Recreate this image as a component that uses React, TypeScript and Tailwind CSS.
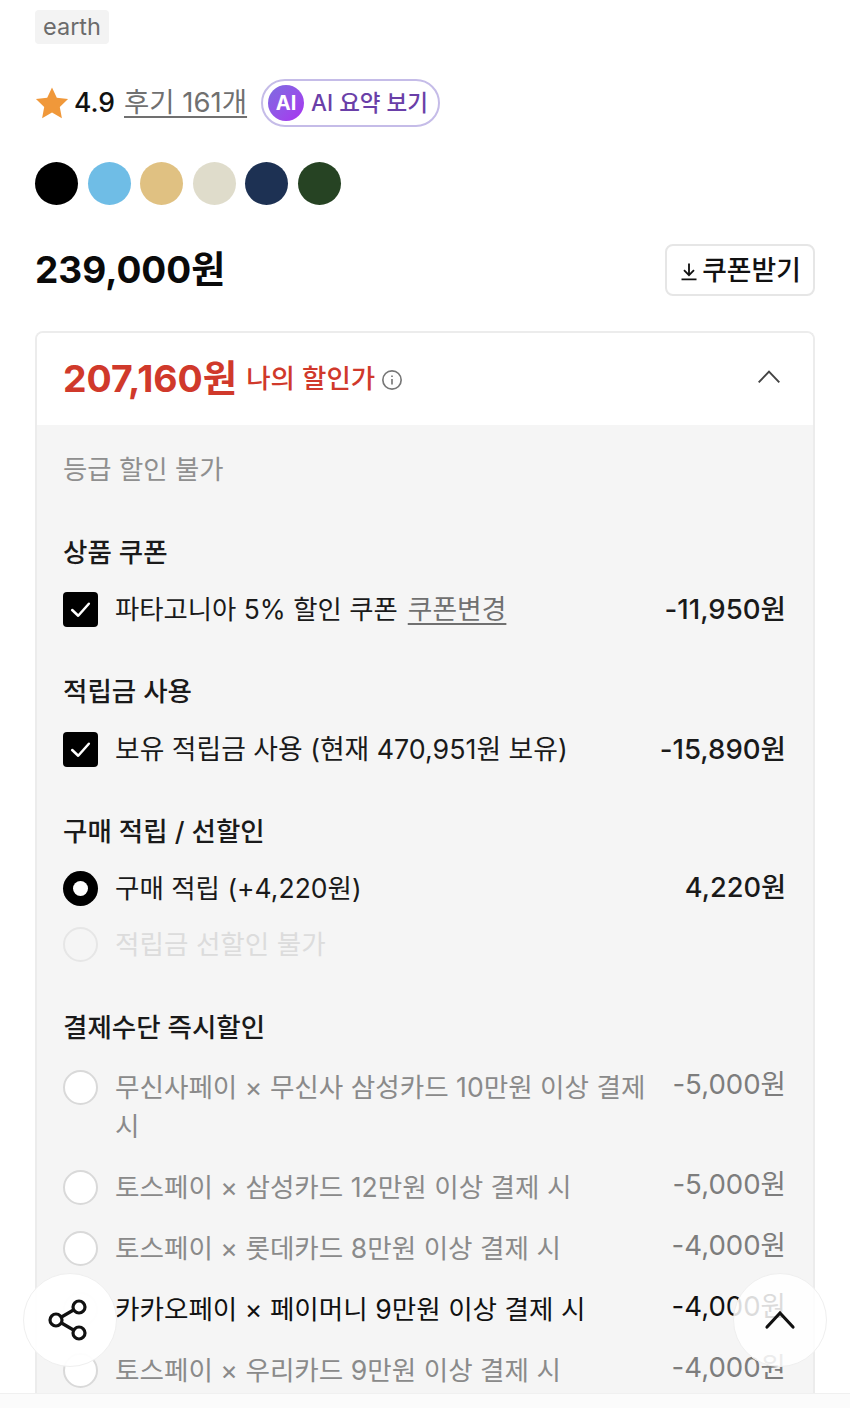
import React from "react";

const font = { fontFamily: '"Inter","Noto Sans CJK KR","Noto Sans",sans-serif' };

function Check() {
  return (
    <span className="flex h-[35px] w-[35px] shrink-0 items-center justify-center rounded-[4px] bg-black">
      <svg width="25" height="25" viewBox="0 0 24 24" fill="none" stroke="#fff" strokeWidth="2.4" strokeLinecap="round" strokeLinejoin="round">
        <path d="M4 12.5 L9.8 18 L20 6.5" />
      </svg>
    </span>
  );
}

function Radio({ kind }: { kind: "on" | "off" | "faint" }) {
  if (kind === "on")
    return (
      <span className="flex h-[35px] w-[35px] shrink-0 items-center justify-center rounded-full bg-black">
        <span className="h-[15px] w-[15px] rounded-full bg-white" />
      </span>
    );
  return (
    <span
      className={
        kind === "off"
          ? "h-[35px] w-[35px] shrink-0 rounded-full border-2 border-[#d9d9d9] bg-white"
          : "h-[35px] w-[35px] shrink-0 rounded-full border-2 border-[#e6e6e6] bg-[#f5f5f5]"
      }
    />
  );
}

function Title({ children, className }: { children: React.ReactNode; className?: string }) {
  return <div className={"text-[26.5px] leading-[39px] font-medium text-[#1a1a1a] " + (className ?? "")}>{children}</div>;
}

function PayRow({ text, amount, dark, className }: { text: string; amount: string; dark?: boolean; className?: string }) {
  return (
    <div className={"flex items-start " + (className ?? "")}>
      <span className="mr-[17px] mt-[2px] flex"><Radio kind={dark ? "faint" : "off"} /></span>
      <span className={"w-[540px] text-[26.6px] leading-[39px] " + (dark ? "text-[#111]" : "text-[#8a8a8a]")}>{text}</span>
      <span className={"ml-auto -mt-[3px] text-[27.6px] leading-[39px] " + (dark ? "text-[#111]" : "text-[#7d7d7d]")}>{amount}</span>
    </div>
  );
}

export default function App() {
  return (
    <div style={font} className="relative h-[1408px] w-[850px] overflow-hidden bg-white">
      <div className="px-[35px] pt-[10px]">
        <div className="inline-block h-[34px] rounded-[4px] bg-[#f3f3f3] px-[8px] text-[23.5px] leading-[34px] text-[#6b6b6b]">earth</div>

        <div className="mt-[35px] flex h-[48px] items-center">
          <svg width="36" height="36" viewBox="0 0 24 24" className="-ml-[1px]">
            <path fill="#f0983a" d="M12 1.6l3.2 6.9 7.5.9-5.5 5.2 1.4 7.5L12 18.4l-6.6 3.7 1.4-7.5L1.300 9.400l7.500-.9z" />
          </svg>
          <span className="ml-[4px] text-[26.5px] font-medium text-[#111]">4.9</span>
          <span className="ml-[9px] text-[27.5px] text-[#707070] underline underline-offset-[4px]">후기 161개</span>
          <span className="ml-[14px] flex h-[48px] w-[179px] items-center rounded-full border-2 border-[#c5bce8] bg-white pl-[5px]">
            <span className="flex h-[36px] w-[36px] items-center justify-center rounded-full bg-gradient-to-br from-[#7b6be0] to-[#a82ff0] text-[20px] font-bold text-white">AI</span>
            <span className="ml-[7px] text-[22.500px] font-medium text-[#6a3fa8]">AI 요약 보기</span>
          </span>
        </div>

        <div className="mt-[35px] flex gap-[9.500px]">
          {["bg-[#000000]", "bg-[#6fbde6]", "bg-[#e0c182]", "bg-[#dfdccb]", "bg-[#1d3153]", "bg-[#264323]"].map((c) => (
            <span key={c} className={"h-[43px] w-[43px] rounded-full " + c} />
          ))}
        </div>

        <div className="mt-[39px] flex items-center justify-between">
          <span className="text-[37px] font-bold leading-[52px] text-[#0a0a0a]">239,000원</span>
          <span className="flex h-[52px] w-[150px] items-center justify-center rounded-[8px] border-2 border-[#e6e6e6] bg-white text-[26.800px] font-medium text-[#111]">
            <svg width="20" height="20" viewBox="0 0 24 24" fill="none" stroke="#111" strokeWidth="2.2" className="mr-[3px] mt-[2px]">
              <path d="M12 3v13M6 11l6 6 6-6M3 22h18" />
            </svg>
            쿠폰받기
          </span>
        </div>

        <div className="mt-[35px] overflow-hidden rounded-t-[8px] border-2 border-b-0 border-[#ececec]">
          <div className="flex h-[92px] items-center bg-white pl-[26px] pr-[31px]">
            <span className="text-[37.400px] font-bold text-[#d0392b]">207,160원</span>
            <span className="ml-[9px] text-[26.500px] font-medium text-[#d0392b]">나의 할인가</span>
            <svg width="22" height="22" viewBox="0 0 24 24" fill="none" stroke="#777" strokeWidth="1.800" className="ml-[6px] mt-[2px]">
              <circle cx="12" cy="12" r="10" />
              <path d="M12 11v6M12 7v1.600" />
            </svg>
            <svg width="26" height="26" viewBox="0 0 24 24" fill="none" stroke="#444" strokeWidth="1.800" className="ml-auto -mt-[4px]">
              <path d="M2.500 17 L12 7 L21.500 17" />
            </svg>
          </div>

          <div className="h-[1000px] bg-[#f5f5f5] pl-[26px] pr-[27px] pt-[25px]">
            <div className="text-[26.400px] leading-[39px] text-[#8f8f8f]">등급 할인 불가</div>

            <Title className="mt-[44px]">상품 쿠폰</Title>
            <div className="mt-[18px] flex h-[39px] items-center">
              <Check />
              <span className="ml-[17px] text-[26.400px] text-[#1a1a1a]">파타고니아 5% 할인 쿠폰</span>
              <span className="ml-[10px] text-[26.800px] text-[#707070] underline underline-offset-[4px]">쿠폰변경</span>
              <span className="ml-auto text-[27.600px] font-medium text-[#1a1a1a]">-11,950원</span>
            </div>

            <Title className="mt-[43px]">적립금 사용</Title>
            <div className="mt-[19px] flex h-[39px] items-center">
              <Check />
              <span className="ml-[17px] text-[26.800px] text-[#1a1a1a]">보유 적립금 사용 (현재 470,951원 보유)</span>
              <span className="ml-auto text-[27.600px] font-medium text-[#1a1a1a]">-15,890원</span>
            </div>

            <Title className="mt-[43px]">구매 적립 / 선할인</Title>
            <div className="mt-[18px] flex h-[39px] items-center">
              <Radio kind="on" />
              <span className="ml-[17px] text-[26.500px] text-[#1a1a1a]">구매 적립 (+4,220원)</span>
              <span className="ml-auto text-[27.200px] font-medium text-[#1a1a1a]">4,220원</span>
            </div>
            <div className="mt-[17px] flex h-[39px] items-center">
              <Radio kind="faint" />
              <span className="ml-[17px] text-[26.600px] text-[#dcdcdc]">적립금 선할인 불가</span>
            </div>

            <Title className="mt-[44px]">결제수단 즉시할인</Title>
            <PayRow className="mt-[21px]" text="무신사페이 × 무신사 삼성카드 10만원 이상 결제 시" amount="-5,000원" />
            <PayRow className="mt-[22px]" text="토스페이 × 삼성카드 12만원 이상 결제 시" amount="-5,000원" />
            <PayRow className="mt-[22px]" text="토스페이 × 롯데카드 8만원 이상 결제 시" amount="-4,000원" />
            <PayRow className="mt-[22px]" dark text="카카오페이 × 페이머니 9만원 이상 결제 시" amount="-4,000원" />
            <PayRow className="mt-[22px]" text="토스페이 × 우리카드 9만원 이상 결제 시" amount="-4,000원" />
          </div>
        </div>
      </div>

      <div className="absolute bottom-0 left-0 h-[15px] w-full border-t border-[#f0f0f0] bg-[#fbfbfb]" />

      <div className="absolute left-[23px] top-[1273px] flex h-[94px] w-[94px] items-center justify-center rounded-full border border-[#efefef] bg-white/95">
        <svg width="42" height="42" viewBox="0 0 42 42" fill="none" stroke="#111" strokeWidth="3.200" className="-ml-[5px]">
          <circle cx="9" cy="21" r="6" />
          <circle cx="32" cy="8" r="6" />
          <circle cx="32" cy="34" r="6" />
          <path d="M14.500 18 L26.500 11M14.500 24 L26.500 31" />
        </svg>
      </div>
      <div className="absolute left-[733px] top-[1273px] flex h-[94px] w-[94px] items-center justify-center rounded-full border border-[#efefef] bg-white/85">
        <svg width="32" height="32" viewBox="0 0 32 32" fill="none" stroke="#111" strokeWidth="3.200" strokeLinecap="round" className="-mt-[2px]">
          <path d="M3 24 L16 10 L29 24" />
        </svg>
      </div>
    </div>
  );
}
